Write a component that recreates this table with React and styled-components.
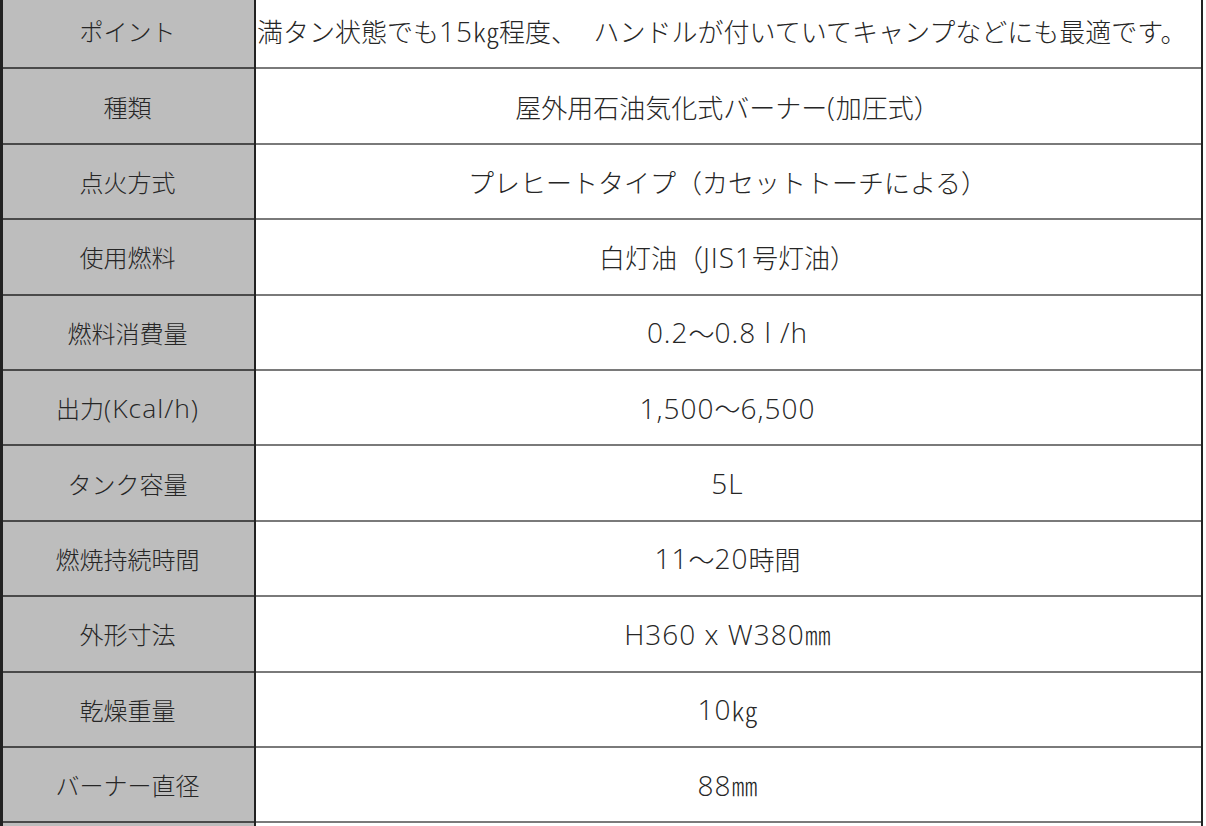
import React from 'react'
import styled, { createGlobalStyle } from 'styled-components'

const specs = [
  { label: 'ポイント', value: '満タン状態でも15㎏程度、  ハンドルが付いていてキャンプなどにも最適です。', left: true },
  { label: '種類', value: '屋外用石油気化式バーナー(加圧式）' },
  { label: '点火方式', value: 'プレヒートタイプ（カセットトーチによる）' },
  { label: '使用燃料', value: '白灯油（JIS1号灯油）' },
  { label: '燃料消費量', value: '0.2～0.8 l /h' },
  { label: '出力(Kcal/h)', value: '1,500～6,500' },
  { label: 'タンク容量', value: '5L' },
  { label: '燃焼持続時間', value: '11～20時間' },
  { label: '外形寸法', value: 'H360 x W380㎜' },
  { label: '乾燥重量', value: '10㎏' },
  { label: 'バーナー直径', value: '88㎜' },
  { label: '', value: '' },
]

// latin runs get a wider, taller face, like the rounded gothic in the original
const runs = (text, size) =>
  text
    .split(/([\x20-\x7E]+)/)
    .filter(Boolean)
    .map((part, i) =>
      /^[\x20-\x7E]+$/.test(part) ? (
        <Latin key={i} $size={size}>{part}</Latin>
      ) : (
        <span key={i}>{part}</span>
      )
    )

const App = () => {
  return (
    <Page>
      <GlobalStyle />
      <Table>
        {specs.map((s, i) => (
          <Row key={i}>
            <Label>{runs(s.label, 26.5)}</Label>
            <Value $left={s.left}>{runs(s.value, 28)}</Value>
          </Row>
        ))}
      </Table>
    </Page>
  )
}

export default App

const GlobalStyle = createGlobalStyle`
  html, body {
    margin: 0;
    padding: 0;
    background: #ffffff;
  }
  body {
    font-family: "Noto Sans CJK JP", "Noto Sans", sans-serif;
  }
`
const Page = styled.div`
  width: 1206px;
  height: 826px;
  overflow: hidden;
  background: #ffffff;
`
const Table = styled.div`
  width: 1203px;
  margin-top: -6px;
  border-left: 3px solid #222;
  border-right: 2px solid #222;
  box-sizing: border-box;
  display: flex;
  flex-direction: column;
`
const Row = styled.div`
  display: grid;
  grid-template-columns: 249px 2px 1fr;
  height: 75.4px;
  box-sizing: border-box;
  flex-shrink: 0;
`
const Latin = styled.span`
  font-family: "Open Sans", "Noto Sans", sans-serif;
  font-size: ${p => p.$size}px;
  font-weight: 300;
  letter-spacing: 1px;
`
const Label = styled.div`
  background: #bdbdbd;
  border-bottom: 2px solid #4a4a4a;
  display: flex;
  align-items: center;
  justify-content: center;
  font-size: 24px;
  font-weight: 300;
  color: #262626;
  grid-column: 1;
  box-shadow: 2px 0 0 #222;
  margin-right: -2px;
  padding-right: 2px;
  position: relative;
  z-index: 1;
  white-space: nowrap;
`
const Value = styled.div`
  grid-column: 3;
  border-bottom: 2px solid #7a7a7a;
  display: flex;
  align-items: center;
  justify-content: ${p => (p.$left ? 'flex-start' : 'center')};
  padding-left: ${p => (p.$left ? '3px' : '0')};
  font-size: 26px;
  font-weight: 300;
  color: #262626;
  white-space: pre;
  overflow: hidden;
`
